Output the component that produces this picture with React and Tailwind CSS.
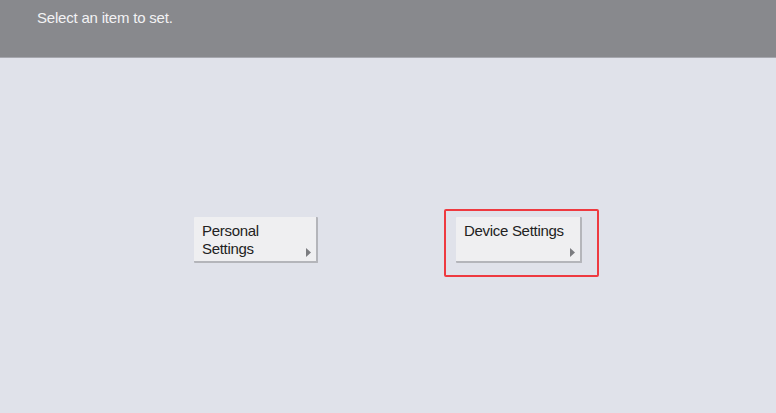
export default function App() {
  const Arrow = () => (
    <svg width="5" height="9" viewBox="0 0 5 9" className="absolute right-[5px] bottom-[4px]">
      <path d="M0 0 L5 4.5 L0 9 Z" fill="#7b7c80" />
    </svg>
  );

  return (
    <div className="w-[776px] h-[413px] bg-[#e0e2ea] flex flex-col font-['Liberation_Sans',sans-serif] overflow-hidden">
      {/* Header */}
      <header className="h-[58px] bg-[#88898d] border-b border-[#a6a7ae] px-[37px] pt-[7px]">
        <p className="text-[15px] text-[#f2f2f4] tracking-[-0.2px]">Select an item to set.</p>
      </header>

      {/* Main */}
      <main className="flex items-start pl-[194px] pt-[151px] gap-[126px]">
        <button className="relative mt-[8px] w-[124px] h-[46px] bg-[#efeff1] border-r-2 border-b-2 border-[#b4b5ba] rounded-[1px] flex flex-col pl-[8px] pt-[5px] text-left">
          <span className="text-[15px] leading-[18px] text-[#222] tracking-[-0.3px]">
            Personal
            <br />
            Settings
          </span>
          <Arrow />
        </button>

        <div className="border-2 border-[#ee3a40] rounded-[2px] pl-[10px] pt-[6px] pr-[15px] pb-[12px]">
          <button className="relative w-[126px] h-[46px] bg-[#efeff1] border-r-2 border-b-2 border-[#b4b5ba] rounded-[1px] flex flex-col pl-[8px] pt-[5px] text-left">
            <span className="text-[15px] leading-[18px] text-[#222] tracking-[-0.3px]">Device Settings</span>
            <Arrow />
          </button>
        </div>
      </main>
    </div>
  );
}
